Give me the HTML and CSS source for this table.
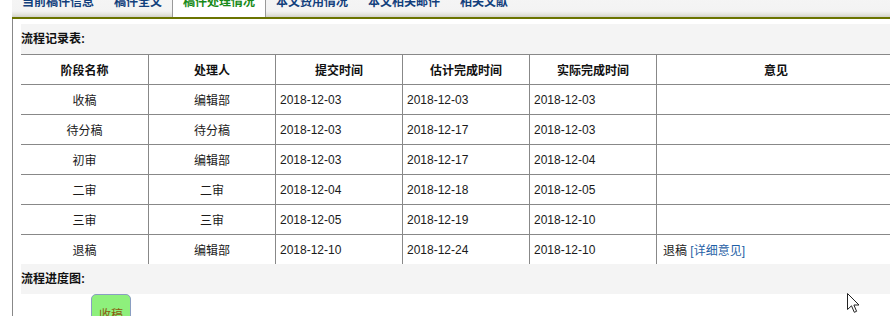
FILE: index.html
```html
<!DOCTYPE html>
<html lang="zh-CN">
<head>
<meta charset="utf-8">
<title>稿件处理情况</title>
<link rel="stylesheet" href="styles.css">
</head>
<body>
<div class="wrap">
  <ul class="tabs">
    <li class="tab">当前稿件信息</li>
    <li class="tab">稿件全文</li>
    <li class="tab active">稿件处理情况</li>
    <li class="tab">本文费用情况</li>
    <li class="tab">本文相关邮件</li>
    <li class="tab">相关文献</li>
  </ul>
  <div class="panel">
    <div class="inner">
      <h3 class="caption">流程记录表:</h3>
      <table class="flow">
        <colgroup>
          <col class="c"><col class="c"><col class="c"><col class="c"><col class="c"><col class="last">
        </colgroup>
        <thead>
          <tr><th>阶段名称</th><th>处理人</th><th>提交时间</th><th>估计完成时间</th><th>实际完成时间</th><th>意见</th></tr>
        </thead>
        <tbody>
          <tr><td class="ctr">收稿</td><td class="ctr">编辑部</td><td>2018-12-03</td><td>2018-12-03</td><td>2018-12-03</td><td class="op"></td></tr>
          <tr><td class="ctr">待分稿</td><td class="ctr">待分稿</td><td>2018-12-03</td><td>2018-12-17</td><td>2018-12-03</td><td class="op"></td></tr>
          <tr><td class="ctr">初审</td><td class="ctr">编辑部</td><td>2018-12-03</td><td>2018-12-17</td><td>2018-12-04</td><td class="op"></td></tr>
          <tr><td class="ctr">二审</td><td class="ctr">二审</td><td>2018-12-04</td><td>2018-12-18</td><td>2018-12-05</td><td class="op"></td></tr>
          <tr><td class="ctr">三审</td><td class="ctr">三审</td><td>2018-12-05</td><td>2018-12-19</td><td>2018-12-10</td><td class="op"></td></tr>
          <tr><td class="ctr">退稿</td><td class="ctr">编辑部</td><td>2018-12-10</td><td>2018-12-24</td><td>2018-12-10</td><td class="op">退稿 <a href="#" class="detail">[详细意见]</a></td></tr>
        </tbody>
      </table>
      <h3 class="caption">流程进度图:</h3>
    </div>
    <div class="chart">
      <div class="node">收稿</div>
    </div>
  </div>
</div>
<svg class="cursor" width="14" height="22" viewBox="0 0 14 22" aria-hidden="true">
  <path d="M0.5 0.5 L0.5 16.5 L4.5 12.8 L7.3 19.3 L9.6 18.3 L6.9 12 L12 12 Z" fill="#fff" stroke="#222" stroke-width="1" stroke-linejoin="round"/>
</svg>
</body>
</html>
```
FILE: styles.css
```css
html, body {
  margin: 0;
  padding: 0;
  background: #fff;
  overflow: hidden;
}

body {
  font-family: "Liberation Sans", "Noto Sans CJK SC", sans-serif;
  font-size: 12px;
  color: #1a1a1a;
  position: relative;
  height: 316px;
}

.wrap {
  margin-left: 12px;
  width: 900px;
}

.tabs {
  list-style: none;
  margin: -4px 0 0 0;
  padding: 0;
  display: flex;
  height: 21px;
  background: linear-gradient(to bottom, #f5f5f5 0%, #f3f3f3 72%, #e6e6e0 86%, #d2d2ca 100%);
  border-bottom: 2px solid #6b7400;
}

.tab {
  padding: 0 10px;
  line-height: 12px;
  color: #123f7c;
  font-weight: bold;
  white-space: nowrap;
}

.tab.active {
  background: #fff;
  color: #178a17;
  border-left: 1px solid #999;
  border-right: 1px solid #999;
}

.panel {
  border-left: 1px solid #888;
  padding: 5px 0 0 8px;
}

.inner {
  background: #f4f4f4;
}

.caption {
  margin: 0;
  font-size: 12px;
  font-weight: bold;
  line-height: 30px;
  height: 30px;
  color: #111;
}

.flow {
  border-collapse: separate;
  border-spacing: 0;
  table-layout: fixed;
  width: 874px;
  background: #fff;
}

.flow col.c {
  width: 127px;
}

.flow th,
.flow td {
  box-sizing: border-box;
  height: 30px;
  padding: 0 4px;
  border-top: 1px solid #888;
  border-left: 1px solid #888;
  white-space: nowrap;
  vertical-align: middle;
  font-weight: normal;
  text-align: left;
}

.flow th:first-child,
.flow td:first-child {
  border-left: none;
}

.flow th {
  font-weight: bold;
  text-align: center;
  color: #111;
}

.flow td.ctr {
  text-align: center;
}

.flow td.op {
  padding-left: 6px;
}

.detail {
  color: #1f5fa6;
  text-decoration: none;
}

.chart {
  padding-left: 70px;
}

.node {
  width: 40px;
  height: 40px;
  box-sizing: border-box;
  border: 1px solid #8a9ec2;
  border-radius: 5px;
  background: #8ef07c;
  color: #8a5a10;
  text-align: center;
  line-height: 40px;
}

.cursor {
  position: absolute;
  left: 847px;
  top: 293px;
}
```
